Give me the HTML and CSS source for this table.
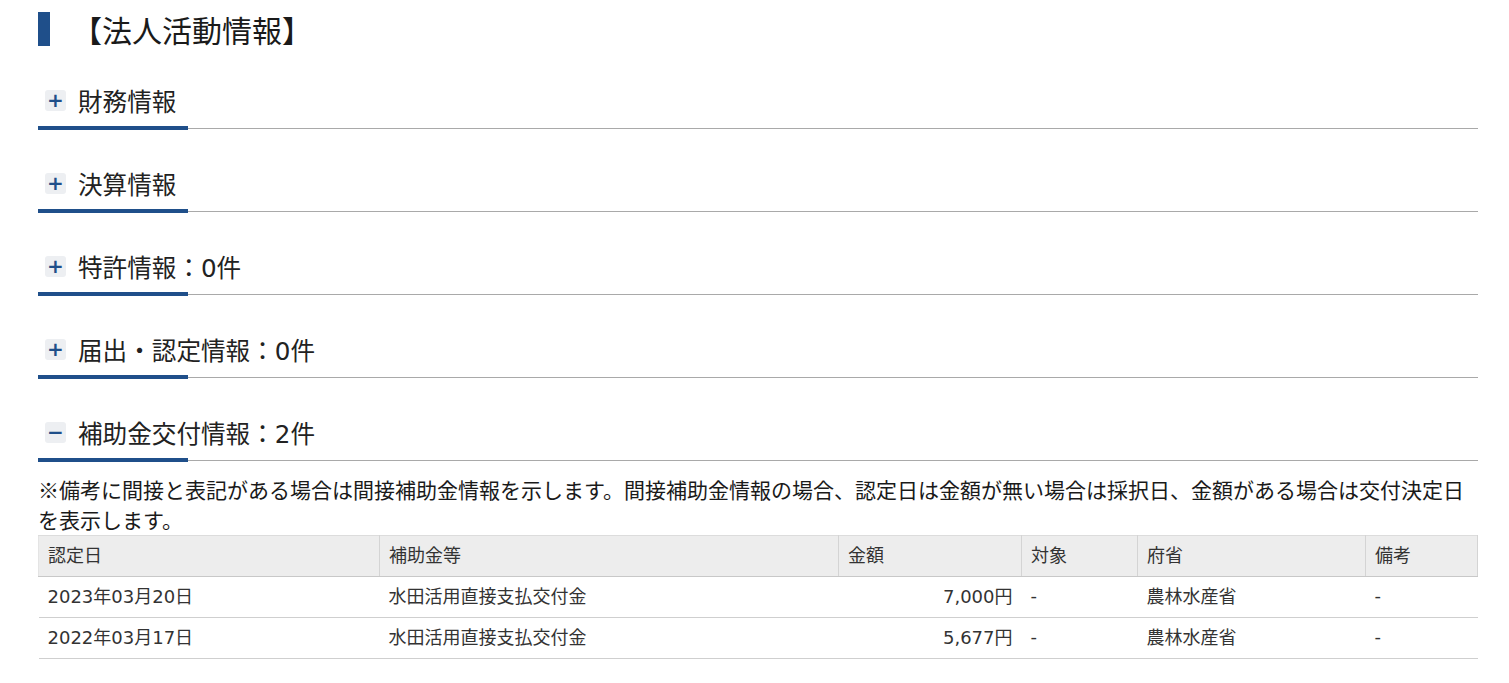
FILE: index.html
```html
<!DOCTYPE html>
<html lang="ja">
<head>
<meta charset="utf-8">
<link rel="stylesheet" href="styles.css">
</head>
<body>
<div class="page">
  <h2 class="title"><span class="title-bar"></span><span class="title-text">【法人活動情報】</span></h2>

  <section class="acc">
    <div class="acc-head"><span class="toggle">+</span><span class="acc-label">財務情報</span></div>
  </section>
  <section class="acc">
    <div class="acc-head"><span class="toggle">+</span><span class="acc-label">決算情報</span></div>
  </section>
  <section class="acc">
    <div class="acc-head"><span class="toggle">+</span><span class="acc-label">特許情報：0件</span></div>
  </section>
  <section class="acc">
    <div class="acc-head"><span class="toggle">+</span><span class="acc-label">届出・認定情報：0件</span></div>
  </section>
  <section class="acc open">
    <div class="acc-head"><span class="toggle minus">−</span><span class="acc-label">補助金交付情報：2件</span></div>
    <p class="note">※備考に間接と表記がある場合は間接補助金情報を示します。間接補助金情報の場合、認定日は金額が無い場合は採択日、金額がある場合は交付決定日を表示します。</p>
    <table class="grid">
      <colgroup>
        <col class="c1"><col class="c2"><col class="c3"><col class="c4"><col class="c5"><col class="c6">
      </colgroup>
      <thead>
        <tr><th>認定日</th><th>補助金等</th><th>金額</th><th>対象</th><th>府省</th><th>備考</th></tr>
      </thead>
      <tbody>
        <tr><td>2023年03月20日</td><td>水田活用直接支払交付金</td><td class="num">7,000円</td><td>-</td><td>農林水産省</td><td>-</td></tr>
        <tr><td>2022年03月17日</td><td>水田活用直接支払交付金</td><td class="num">5,677円</td><td>-</td><td>農林水産省</td><td>-</td></tr>
      </tbody>
    </table>
  </section>
</div>
</body>
</html>
```

FILE: styles.css
```css
html, body {
  margin: 0;
  padding: 0;
  background: #fff;
}
body {
  font-family: "DejaVu Sans", "Noto Sans CJK JP", sans-serif;
  color: #222;
}
.page {
  padding: 0 31px 0 38px;
}
.title {
  display: flex;
  align-items: center;
  height: 58px;
  margin: 0;
  font-weight: normal;
}
.title-bar {
  width: 12px;
  height: 34px;
  background: #1f4f8a;
}
.title-text {
  margin-left: 22px;
  font-size: 30px;
  font-family: "Noto Sans CJK JP", sans-serif;
  color: #1a1a1a;
}
.acc {
  margin-top: 20px;
}
.acc + .acc {
  margin-top: 32px;
}
.acc-head {
  position: relative;
  display: flex;
  align-items: center;
  height: 44px;
  padding-bottom: 6px;
  border-bottom: 1px solid #a9a9a9;
}
.acc-head::after {
  content: "";
  position: absolute;
  left: 0;
  bottom: -2px;
  width: 150px;
  height: 4px;
  background: #1f4f8a;
}
.toggle {
  display: flex;
  align-items: center;
  justify-content: center;
  width: 21px;
  height: 21px;
  margin-left: 7px;
  margin-right: 12px;
  border-radius: 3px;
  background: #edeff2;
  color: #1f4f8a;
  font-size: 20px;
  font-weight: bold;
  line-height: 1;
  font-family: "DejaVu Sans", sans-serif;
}
.acc-label {
  font-size: 24.6px;
  color: #222;
}
.note {
  margin: 13px 0 0;
  font-family: "Noto Sans CJK JP", sans-serif;
  font-size: 21px;
  line-height: 30px;
  color: #1a1a1a;
}
.grid {
  width: 100%;
  margin-top: 1px;
  border-collapse: collapse;
  table-layout: fixed;
  font-size: 18px;
  color: #333;
}
.c1 { width: 341px; }
.c2 { width: 459px; }
.c3 { width: 183px; }
.c4 { width: 116px; }
.c5 { width: 228px; }
.c6 { width: auto; }
.grid th {
  height: 36px;
  padding: 0 9px 4px;
  text-align: left;
  font-weight: normal;
  background: #ededed;
  border-top: 1px solid #dcdcdc;
  border-bottom: 1px solid #c8c8c8;
  border-right: 1px solid #d4d4d4;
}
.grid th:first-child {
  border-left: 1px solid #e4e4e4;
}
.grid td {
  height: 36px;
  padding: 0 9px 4px;
  border-bottom: 1px solid #cfcfcf;
}
.grid td.num {
  text-align: right;
}
```
